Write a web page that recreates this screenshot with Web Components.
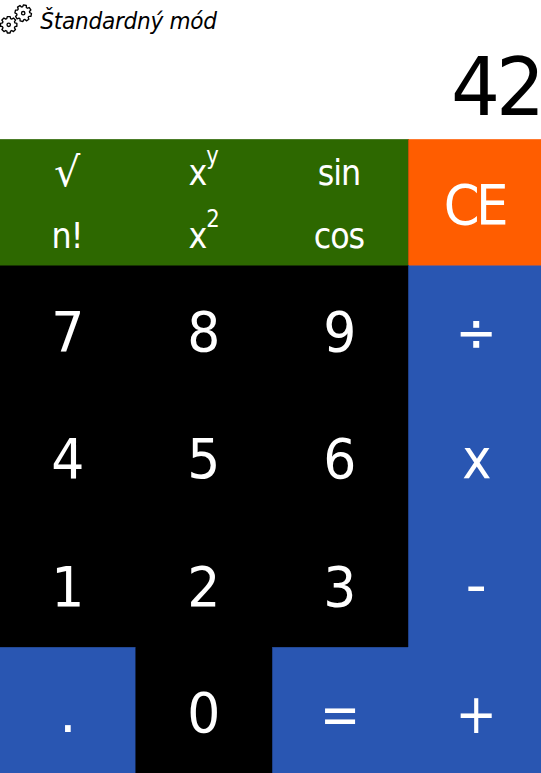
<!DOCTYPE html>
<html lang="sk"><head><meta charset="utf-8"><title>Kalkulačka</title>
<style>html,body{margin:0;height:100%;overflow:hidden;background:#fff}</style></head><body>
<calc-app></calc-app>
<script>
const COND='"DejaVu Sans Condensed","DejaVu Sans",sans-serif';
class CalcKey extends HTMLElement{
  constructor(){super();this.attachShadow({mode:'open'}).innerHTML=`<style>
  :host{display:flex;align-items:center;justify-content:center;background:#000;color:#fff;font:56px/1 "DejaVu Sans",sans-serif;font-stretch:normal;min-width:0;min-height:0;box-sizing:border-box;--dy:3px;--sx:.93}
  :host([op]){background:#2956b2;box-shadow:inset 1px 0 var(--edge,#2956b2)}
  :host([cond]){font-family:${COND};font-stretch:condensed;--sx:.98}
  :host([clear]){background:#ff5d00;grid-row:span 2;letter-spacing:-4px;--dy:2.8px;--dx:-2px;--sx:.92;box-shadow:inset 1px 0 #c25209,inset 0 1px #ff7a30}
  :host([fn]){background:#2d6800;font-size:36px;font-family:${COND};font-stretch:condensed;letter-spacing:-1px;--sx:.98;--dy:2px;--dx:-.8px}
  .t{display:block;white-space:nowrap;transform:translate(var(--dx,0),var(--dy,0)) scaleX(var(--sx,1))}
  ::slotted(sup){font-size:24px;line-height:0;vertical-align:21.5px}
  </style><span class="t"><slot></slot></span>`;}
}
customElements.define('calc-key',CalcKey);
class CalcGears extends HTMLElement{
  constructor(){super();
  const gear=(cx,cy,rot)=>{let p=[];for(let i=0;i<8;i++){for(const [o,r] of [[-17,6.5],[-10,8.3],[10,8.3],[17,6.5]]){const a=(i*45+o+rot)*Math.PI/180;p.push((cx+r*Math.cos(a)).toFixed(2)+' '+(cy+r*Math.sin(a)).toFixed(2));}}
  return `<path d="M${p.join('L')}Z"/><circle cx="${cx}" cy="${cy}" r="1.7"/>`;};
  this.attachShadow({mode:'open'}).innerHTML=`<style>:host{display:block;width:33px;height:36px}svg{display:block}</style><svg width="33" height="36" fill="none" stroke="#000" stroke-width="1.35" stroke-linejoin="round">${gear(8.7,24.8,0)}${gear(23.2,13.2,12)}</svg>`;}
}
customElements.define('calc-gears',CalcGears);
class CalcApp extends HTMLElement{
  constructor(){super();this.attachShadow({mode:'open'}).innerHTML=`<style>
  :host{display:flex;flex-direction:column;width:541px;height:773px;overflow:hidden;color:#000}
  header{display:flex;height:40px;flex:none}
  .mode{font-family:${COND};font-stretch:condensed;font-style:italic;font-size:23px;line-height:42px;padding-left:7px;white-space:nowrap;letter-spacing:-.25px;transform:scaleX(1.045);transform-origin:0 0}
  .out{height:99px;flex:none;box-sizing:border-box;padding-top:1px;text-align:right;font:80px/94px "DejaVu Sans",sans-serif;letter-spacing:-4.3px;transform:scaleX(.965);transform-origin:100% 0}
  .pad{display:grid;width:545px;height:634px;grid-template-columns:136px 136px 136px 137px;grid-template-rows:63px 63px 127px 128px 127px 126px}
  .top{box-shadow:inset 0 1px #4c7d29}
  .seven{box-shadow:inset 0 1px #173400}
  .r{--edge:#1e4088}
  .div{box-shadow:inset 1px 0 #1e4088,inset 0 1px #945a5f}
  .dot{box-shadow:inset -1px 0 #12264f,inset 0 1px #224894;--sx:.97}
  .eq{box-shadow:inset 1px 0 #1e4088,inset 0 1px #224894;--sx:.95;--dy:5px}
  .plus{--dy:4px}
  .minus{--sx:1.06;--dy:1px}
  .root{font-size:41px;--sx:1.12;--dy:2px;--dx:-1.6px}
  </style>
  <header><calc-gears></calc-gears><div class="mode">Štandardný mód</div></header>
  <div class="out">42</div>
  <div class="pad">
  <calc-key fn class="top root">√</calc-key><calc-key fn class="top">x<sup>y</sup></calc-key><calc-key fn class="top">sin</calc-key><calc-key clear>CE</calc-key>
  <calc-key fn>n!</calc-key><calc-key fn>x<sup>2</sup></calc-key><calc-key fn>cos</calc-key>
  <calc-key class="seven">7</calc-key><calc-key class="seven">8</calc-key><calc-key class="seven">9</calc-key><calc-key op cond class="div">÷</calc-key>
  <calc-key>4</calc-key><calc-key>5</calc-key><calc-key>6</calc-key><calc-key op cond class="r">x</calc-key>
  <calc-key>1</calc-key><calc-key>2</calc-key><calc-key>3</calc-key><calc-key op class="r minus">-</calc-key>
  <calc-key op class="dot">.</calc-key><calc-key>0</calc-key><calc-key op cond class="eq">=</calc-key><calc-key op cond class="plus">+</calc-key>
  </div>`;}
}
customElements.define('calc-app',CalcApp);
</script></body></html>
